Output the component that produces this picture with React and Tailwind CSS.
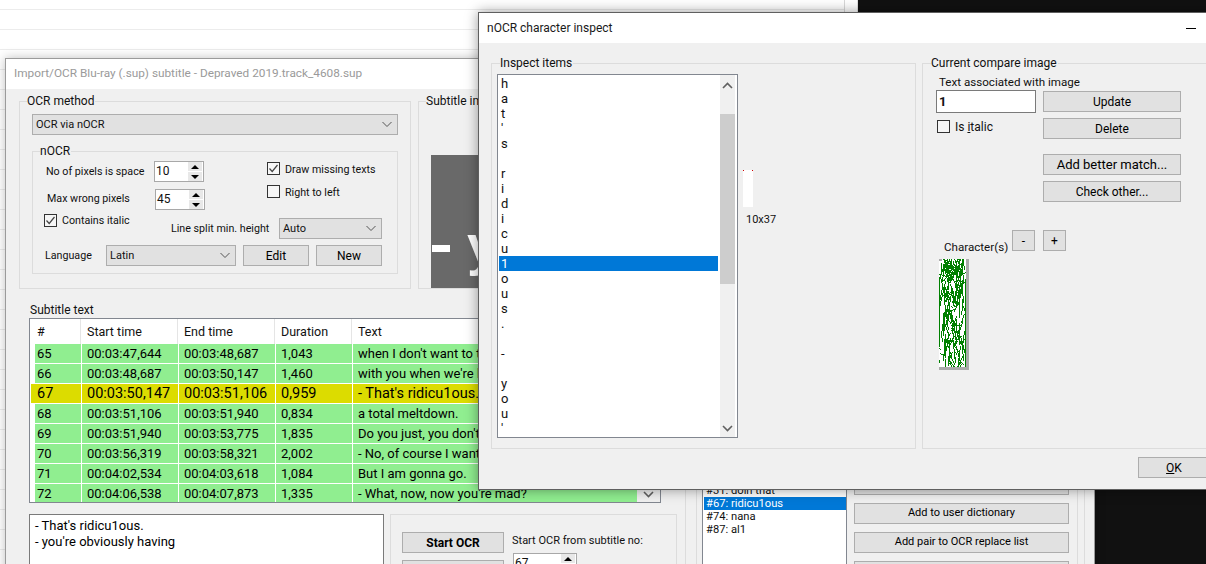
import React from "react";

const rows = [
  ["65", "00:03:47,644", "00:03:48,687", "1,043", "when I don't want to talk about it"],
  ["66", "00:03:48,687", "00:03:50,147", "1,460", "with you when we're having"],
  ["67", "00:03:50,147", "00:03:51,106", "0,959", "- That's ridicu1ous.<br />- you're obviously having"],
  ["68", "00:03:51,106", "00:03:51,940", "0,834", "a total meltdown."],
  ["69", "00:03:51,940", "00:03:53,775", "1,835", "Do you just, you don't want to"],
  ["70", "00:03:56,319", "00:03:58,321", "2,002", "- No, of course I want to stay"],
  ["71", "00:04:02,534", "00:04:03,618", "1,084", "But I am gonna go."],
  ["72", "00:04:06,538", "00:04:07,873", "1,335", "- What, now, now you're mad?"],
];

const inspectItems = ["h", "a", "t", "'", "s", "", "r", "i", "d", "i", "c", "u", "1", "o", "u", "s", ".", "", "-", "", "y", "o", "u", "'"];

// seeded noise so the match scribble stays the same between runs
function scribbleLines() {
  let seed = 4711;
  const next = () => {
    seed = (seed * 16807) % 2147483647;
    return seed / 2147483647;
  };
  const lines = [[0.5, 18, 0.5, 88], [26.5, 20, 26.5, 108]];
  for (let i = 0; i < 130; i++) {
    const x1 = 1 + next() * 25;
    const y1 = next() * 108;
    lines.push([x1, y1, x1 + (next() - 0.5) * 12, y1 + (next() - 0.5) * 50]);
  }
  for (let i = 0; i < 50; i++) {
    const x = 8 + next() * 10;
    const y = 4 + next() * 18;
    lines.push([x, y, x + (next() - 0.5) * 22, y + (next() - 0.5) * 14]);
  }
  for (let i = 0; i < 24; i++) {
    const x = 10 + next() * 8;
    const y = 20 + next() * 84;
    lines.push([x, y, x + (next() - 0.5) * 10, y + (next() - 0.5) * 24]);
  }
  return lines;
}

const Chevron = ({ up, className = "" }) => (
  <svg width="11" height="7" viewBox="0 0 11 7" className={className}>
    <path d={up ? "M1 6L5.5 1.5L10 6" : "M1 1L5.5 5.5L10 1"} fill="none" stroke="#606060" strokeWidth="1.6" />
  </svg>
);

const Button = ({ className = "", children }) => (
  <div className={`flex h-[21px] items-center justify-center border border-[#adadad] bg-[#e1e1e1] text-black ${className}`}>
    {children}
  </div>
);

const Combo = ({ label, className = "" }) => (
  <div className={`flex h-[21px] items-center justify-between border border-[#adadad] bg-[#e1e1e1] pl-[3px] pr-[3px] text-[11px] ${className}`}>
    <span className="pt-[2px]">{label}</span>
    <svg width="12" height="7" viewBox="0 0 12 7" className="mr-px">
      <path d="M1.5 1L6 5.5L10.5 1" fill="none" stroke="#555" strokeWidth="1" />
    </svg>
  </div>
);

const Spin = ({ value, className = "" }) => (
  <div className={`flex h-[21px] border border-[#a8a8a8] bg-white text-[12px] ${className}`}>
    <span className="flex-1 pl-[1px] leading-[19px]">{value}</span>
    <div className="flex w-[15px] flex-col gap-px bg-white pr-px">
      <div className="flex h-[9px] items-center justify-center bg-[#e8e8e8]">
        <div className="h-0 w-0 border-x-[4px] border-b-[4px] border-x-transparent border-b-black" />
      </div>
      <div className="flex h-[9px] items-center justify-center bg-[#e8e8e8]">
        <div className="h-0 w-0 border-x-[4px] border-t-[4px] border-x-transparent border-t-black" />
      </div>
    </div>
  </div>
);

const Check = ({ checked, label, className = "", labelClass = "" }) => (
  <div className={`flex h-[13px] items-center ${className}`}>
    <div className="flex h-[13px] w-[13px] shrink-0 items-center justify-center border border-[#333] bg-[#f6f6f6]">
      {checked && (
        <svg width="11" height="11" viewBox="0 0 11 11">
          <path d="M1.5 5.5L4.2 8.5L9.5 2" fill="none" stroke="#444" strokeWidth="1.2" />
        </svg>
      )}
    </div>
    <span className={`ml-[5px] whitespace-nowrap ${labelClass}`}>{label}</span>
  </div>
);

const Group = ({ title, className = "", titleClass = "left-2", children }) => (
  <div className={`relative border border-[#dcdcdc] ${className}`}>
    {title && (
      <span className={`absolute top-[-8px] bg-[#f0f0f0] pr-px text-[12px] leading-[14px] whitespace-nowrap ${titleClass}`}>{title}</span>
    )}
    {children}
  </div>
);

const OcrMethod = () => (
  <Group title="OCR method" titleClass="left-[7px]" className="h-[188px] w-[392px] shrink-0 pl-3 pt-3">
    <Combo label="OCR via nOCR" className="w-[366px]" />
    <Group title="nOCR" titleClass="left-[7px]" className="mt-4 h-[123px] w-[366px] text-[10.7px]">
      <div className="flex pt-[9px]">
        <div className="w-[234px]">
          <div className="flex items-center pl-[13px]">
            <span className="w-[108px] whitespace-nowrap pt-[2px]">No of pixels is space</span>
            <Spin value="10" className="w-[50px]" />
          </div>
          <div className="mt-[7px] flex items-center pl-[14px]">
            <span className="w-[108px] whitespace-nowrap">Max wrong pixels</span>
            <Spin value="45" className="w-[50px]" />
          </div>
        </div>
        <div className="flex flex-col gap-[10px] pt-px">
          <Check checked label="Draw missing texts" labelClass="pt-[3px]" />
          <Check label="Right to left" labelClass="pt-[3px]" />
        </div>
      </div>
      <div className="mt-1 flex items-start">
        <Check checked label="Contains italic" labelClass="pt-[2px]" className="ml-[11px] w-[127px]" />
        <span className="mt-[7px] w-[108px] whitespace-nowrap">Line split min. height</span>
        <Combo label="Auto" className="mt-1 w-[103px]" />
      </div>
      <div className="mt-[6px] flex items-center pl-3">
        <span className="w-[61px] pt-px">Language</span>
        <Combo label="Latin" className="w-[130px]" />
        <Button className="ml-[7px] w-[66px] text-[12px]">Edit</Button>
        <Button className="ml-[7px] w-[66px] text-[12px]">New</Button>
      </div>
    </Group>
  </Group>
);

const SubtitleGrid = () => (
  <div className="ml-[10px] flex h-[185px] w-[632px] overflow-hidden border border-[#828790] bg-white">
    <div className="w-[607px] shrink-0">
      <div className="flex h-[25px] items-center text-[12.5px]">
        <div className="flex h-full w-[51px] items-center border-r border-[#e5e5e5] pl-[7px] pt-[2px]">#</div>
        <div className="flex h-full w-[97px] items-center border-r border-[#e5e5e5] pl-[6px] pt-[2px]">Start time</div>
        <div className="flex h-full w-[97px] items-center border-r border-[#e5e5e5] pl-[6px] pt-[2px]">End time</div>
        <div className="flex h-full w-[77px] items-center border-r border-[#e5e5e5] pl-[6px] pt-[2px]">Duration</div>
        <div className="pl-[6px] pt-[2px]">Text</div>
      </div>
      {rows.map((r) => {
        const selected = r[0] === "67";
        const cell = selected ? "bg-[#dcdc00] text-[14.5px]" : "bg-[#90ee90]";
        return (
          <div key={r[0]} className="flex h-5 gap-px whitespace-nowrap text-[13px] leading-[19px] text-black">
            <div className={`h-[19px] ${cell} ${selected ? "ml-px w-[50px] pl-[6px]" : "ml-[5px] w-[46px] pl-[2px]"}`}>{r[0]}</div>
            <div className={`h-[19px] w-[96px] pl-[5px] ${cell}`}>{r[1]}</div>
            <div className={`h-[19px] w-[96px] pl-[5px] ${cell}`}>{r[2]}</div>
            <div className={`h-[19px] w-[76px] pl-[5px] ${cell}`}>{r[3]}</div>
            <div className={`h-[19px] w-[284px] overflow-hidden pl-[5px] ${cell}`}>{r[4]}</div>
          </div>
        );
      })}
    </div>
    <div className="flex flex-1 flex-col items-center justify-end bg-[#f0f0f0] pb-[4px]">
      <Chevron />
    </div>
  </div>
);

const ImportWindow = () => (
  <div className="absolute left-[5px] top-[58px] h-[520px] w-[1090px] overflow-hidden border border-[#9b9b9b] bg-[#f0f0f0] shadow-[0_0_10px_rgba(0,0,0,0.25)]">
    <div className="flex h-[30px] items-center bg-white pl-2 text-[11.8px] text-[#9a9a9a]">
      Import/OCR Blu-ray (.sup) subtitle - Depraved 2019.track_4608.sup
    </div>
    <div className="flex pl-[13px] pt-3">
      <div className="w-[658px] shrink-0">
        <div className="flex">
          <OcrMethod />
          <Group title="Subtitle image" titleClass="left-[7px]" className="ml-[7px] h-[188px] w-[259px] pl-3">
            <div className="relative mt-[53px] h-[133px] overflow-hidden bg-[#696969] pl-px font-['Liberation_Sans'] text-white">
              <div className="absolute left-px top-[90px] h-[7px] w-[18px] bg-white" />
              <span className="absolute left-[36px] top-[62px] text-[56px] font-bold leading-none">y</span>
            </div>
          </Group>
        </div>
        <div className="ml-[11px] mt-[14px] h-[15px] leading-[14px]">Subtitle text</div>
        <SubtitleGrid />
        <div className="mt-[11px] flex">
          <div className="ml-[10px] h-[70px] w-[355px] border border-[#7a7a7a] bg-white pl-[5px] pt-[3px] text-[13px] leading-4 text-black">
            <div>- That's ridicu1ous.</div>
            <div>- you're obviously having</div>
          </div>
          <Group className="ml-[6px] flex h-[70px] w-[287px] pl-[11px] pt-[17px]">
            <div className="flex w-[102px] flex-col gap-[7px]">
              <Button className="font-bold">Start OCR</Button>
              <Button />
            </div>
            <div className="ml-2">
              <div className="whitespace-nowrap pt-px text-[11px] leading-4">Start OCR from subtitle no:</div>
              <Spin value="67" className="ml-px mt-[4px] w-[64px]" />
            </div>
          </Group>
        </div>
      </div>
      <div className="ml-[8px] mt-[100px] h-[500px] w-[400px] border border-[#dcdcdc] pl-[10px] pt-[269px]">
        <div className="h-[300px] w-[382px] border border-[#dcdcdc] pl-[5px]">
          <div className="flex">
            <div className="h-[200px] w-[145px] shrink-0 border border-[#828790] bg-white pl-[1px] pt-[11px] text-[11.2px] leading-[13px]">
              <div className="h-[13px] pl-[2px]">#31: doin that</div>
              <div className="h-[13px] bg-[#0078d7] pl-[2px] text-white">#67: ridicu1ous</div>
              <div className="h-[13px] pl-[2px]">#74: nana</div>
              <div className="h-[13px] pl-[2px]">#87: al1</div>
            </div>
            <div className="ml-[7px] flex w-[215px] flex-col gap-2 pt-[2px] text-[11px]">
              <Button>Add to dictionary</Button>
              <Button>Add to user dictionary</Button>
              <Button>Add pair to OCR replace list</Button>
              <Button />
            </div>
          </div>
        </div>
      </div>
    </div>
  </div>
);

const InspectList = () => (
  <div className="relative mt-[10px] ml-[5px] h-[364px] w-[241px] border border-[#828790] bg-white">
    <div className="pl-px pt-[1px] text-[13px] leading-[15px]">
      {inspectItems.map((c, i) => (
        <div key={i} className={`h-[15px] w-[219px] pl-[2px] ${c === "1" ? "bg-[#0078d7] text-white" : ""}`}>
          {c}
        </div>
      ))}
    </div>
    <div className="absolute bottom-0 right-[2px] top-0 flex w-[15px] flex-col items-center bg-[#f0f0f0]">
      <Chevron up className="mt-[7px]" />
      <div className="mt-[25px] h-[170px] w-full bg-[#cdcdcd]" />
      <Chevron className="mt-auto mb-[5px]" />
    </div>
  </div>
);

const CompareGroup = () => {
  const lines = scribbleLines();
  return (
    <Group title="Current compare image" className="ml-[6px] h-[386px] w-[300px] shrink-0 pl-[13px] pt-[11px]">
      <div className="ml-[3px] h-[15px] text-[11.6px] leading-[15px]">Text associated with image</div>
      <div className="flex">
        <div className="flex w-[107px] flex-col">
          <div className="h-[23px] w-[100px] border border-[#7a7a7a] bg-white pl-[2px] text-[13px] font-bold leading-[21px]">1</div>
          <Check label={<span>Is <u>i</u>talic</span>} className="ml-px mt-[7px]" />
        </div>
        <div className="flex w-[138px] flex-col pt-px">
          <Button>Update</Button>
          <Button className="mt-[6px]">Delete</Button>
          <Button className="mt-[15px] text-[13px]">Add better match...</Button>
          <Button className="mt-[6px]">Check other...</Button>
        </div>
      </div>
      <div className="mt-[28px] flex items-start pl-2">
        <span className="mt-[9px] w-[68px] whitespace-nowrap text-[11.6px]">Character(s)</span>
        <Button className="w-[23px]">-</Button>
        <Button className="ml-2 w-[23px]">+</Button>
      </div>
      <div className="relative ml-[3px] mt-[3px] h-[111px] w-[30px] border-b-[3px] border-r-[3px] border-b-[#aaaaaa] border-r-[#aaaaaa] bg-white">
        <svg width="27" height="108" viewBox="0 0 27 108" shapeRendering="crispEdges">
          {lines.map((l, i) => (
            <line key={i} x1={l[0]} y1={l[1]} x2={l[2]} y2={l[3]} stroke="#008000" strokeWidth="1" />
          ))}
        </svg>
        <div className="absolute left-0 top-0 h-[2px] w-[3px] bg-[#aaaaaa]" />
      </div>
    </Group>
  );
};

const InspectWindow = () => (
  <div className="absolute left-[478px] top-[12px] h-[478px] w-[760px] overflow-hidden border border-[#5f5f5f] bg-[#f0f0f0] shadow-[0_0_12px_rgba(0,0,0,0.4)]">
    <div className="flex h-[30px] items-center bg-white pl-2 text-[#1a1a1a]">
      nOCR character inspect
      <div className="absolute left-[707px] top-[15px] h-px w-[10px] bg-black" />
    </div>
    <div className="flex pl-3 pt-5">
      <Group title="Inspect items" className="h-[386px] w-[425px] shrink-0">
        <div className="flex">
          <InspectList />
          <div className="ml-[5px] pt-[106px]">
            <div className="relative h-[37px] w-[10px] bg-white">
              <div className="absolute left-0 top-0 h-px w-px bg-[#d00000]" />
              <div className="absolute right-0 top-0 h-px w-px bg-[#d00000]" />
            </div>
            <div className="ml-[3px] mt-[5px] text-[11px]">10x37</div>
          </div>
        </div>
      </Group>
      <CompareGroup />
    </div>
    <div className="flex pl-[659px] pt-2">
      <Button className="w-[72px]">
        <span><u>O</u>K</span>
      </Button>
    </div>
  </div>
);

export default function App() {
  return (
    <div className="relative h-[564px] w-[1206px] overflow-hidden bg-[#111111] font-['Roboto'] text-[12px] text-[#111]">
      <div className="h-full w-[858px] border-r border-[#e0e0e0] bg-white">
        <div className="w-[845px] border-r border-[#d8d8d8]">
          {Array.from({ length: 29 }).map((_, i) => (
            <div key={i} className={`border-b border-[#ececec] ${i === 0 ? "h-[10px]" : "h-5"}`} />
          ))}
        </div>
      </div>
      <ImportWindow />
      <InspectWindow />
    </div>
  );
}
